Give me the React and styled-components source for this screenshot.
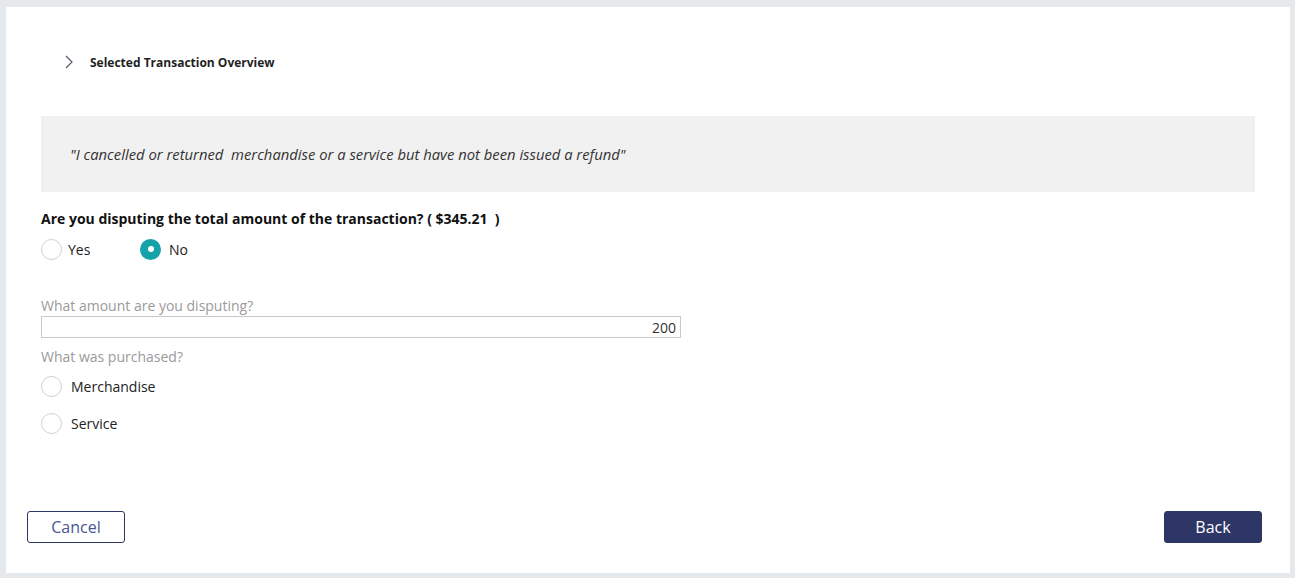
import React, { useState } from "react";
import styled, { createGlobalStyle } from "styled-components";

const GlobalStyle = createGlobalStyle`
  * {
    box-sizing: border-box;
  }
  body {
    margin: 0;
    background: #e5e9ec;
    font-family: "Open Sans", "Noto Sans", sans-serif;
  }
`;

const Page = styled.div`
  width: 1295px;
  height: 578px;
  padding: 7px 5px 5px 6px;
  background: #e5e9ec;
`;

const Panel = styled.div`
  height: 100%;
  background: #fff;
  display: flex;
  flex-direction: column;
  padding: 45px 35px 30px 35px;
`;

const Header = styled.div`
  display: flex;
  align-items: center;
  height: 20px;
  margin-left: 24px;
  gap: 17px;
  font-size: 12px;
  font-weight: 700;
  color: #1f1f1f;
`;

const Quote = styled.div`
  margin-top: 44px;
  height: 76px;
  background: #f1f1f1;
  display: flex;
  align-items: center;
  padding-left: 29px;
  font-size: 14.8px;
  font-style: italic;
  color: #333;
  white-space: pre;
`;

const Question = styled.div`
  margin-top: 17px;
  line-height: 20px;
  font-size: 14px;
  font-weight: 700;
  color: #111;
  white-space: pre;
`;

const RadioRow = styled.div`
  display: flex;
  margin-top: ${(p) => p.top}px;
`;

const RadioItem = styled.label`
  display: flex;
  align-items: center;
  gap: ${(p) => p.gap}px;
  width: ${(p) => (p.width ? `${p.width}px` : "auto")};
  height: 20px;
  font-size: 14px;
  color: #222;
  cursor: pointer;
`;

const Circle = styled.span`
  width: 21px;
  height: 21px;
  border-radius: 50%;
  flex-shrink: 0;
  display: flex;
  align-items: center;
  justify-content: center;
  border: ${(p) => (p.checked ? "none" : "1px solid #cfcfcf")};
  background: ${(p) => (p.checked ? "#16a2a9" : "#fff")};

  &::after {
    content: "";
    display: ${(p) => (p.checked ? "block" : "none")};
    width: 6px;
    height: 6px;
    border-radius: 50%;
    background: #fff;
  }
`;

const Label = styled.div`
  margin-top: ${(p) => p.top}px;
  line-height: 20px;
  font-size: 14px;
  color: #9a9a9a;
`;

const AmountInput = styled.input`
  margin-top: 0;
  width: 640px;
  height: 22px;
  border: 1px solid #c9c9c9;
  padding: 0 4px;
  text-align: right;
  font-family: inherit;
  font-size: 14px;
  color: #333;
  outline: none;
`;

const Footer = styled.div`
  margin-top: auto;
  margin-left: -14px;
  margin-right: -7px;
  display: flex;
  justify-content: space-between;
`;

const Button = styled.button`
  width: 98px;
  height: 32px;
  border-radius: 3px;
  font-family: inherit;
  font-size: 16px;
  cursor: pointer;
  border: 1px solid #2e3666;
  background: ${(p) => (p.primary ? "#2e3666" : "#fff")};
  color: ${(p) => (p.primary ? "#fff" : "#4a5593")};
`;

function Radio({ label, checked, onClick, gap = 6, width }) {
  return (
    <RadioItem gap={gap} width={width} onClick={onClick}>
      <Circle checked={checked} />
      {label}
    </RadioItem>
  );
}

export default function App() {
  const [total, setTotal] = useState("no");
  const [purchase, setPurchase] = useState("");
  const [amount, setAmount] = useState("200");

  return (
    <>
      <GlobalStyle />
      <Page>
        <Panel>
          <Header>
            <svg width="8" height="14" viewBox="0 0 8 14">
              <path d="M1 1l6 6-6 6" fill="none" stroke="#555a6e" strokeWidth="1.2" />
            </svg>
            Selected Transaction Overview
          </Header>
          <Quote>"I cancelled or returned  merchandise or a service but have not been issued a refund"</Quote>
          <Question>Are you disputing the total amount of the transaction? ( $345.21  )</Question>
          <RadioRow top={10}>
            <Radio label="Yes" width={99} checked={total === "yes"} onClick={() => setTotal("yes")} />
            <Radio label="No" gap={8} checked={total === "no"} onClick={() => setTotal("no")} />
          </RadioRow>
          <Label top={37}>What amount are you disputing?</Label>
          <AmountInput value={amount} onChange={(e) => setAmount(e.target.value)} />
          <Label top={9}>What was purchased?</Label>
          <RadioRow top={9}>
            <Radio label="Merchandise" gap={9} checked={purchase === "m"} onClick={() => setPurchase("m")} />
          </RadioRow>
          <RadioRow top={17}>
            <Radio label="Service" gap={9} checked={purchase === "s"} onClick={() => setPurchase("s")} />
          </RadioRow>
          <Footer>
            <Button>Cancel</Button>
            <Button primary>Back</Button>
          </Footer>
        </Panel>
      </Page>
    </>
  );
}
